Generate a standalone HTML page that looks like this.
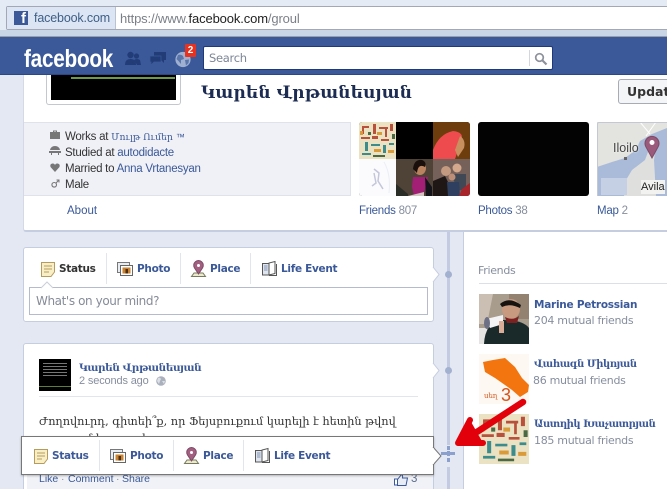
<!DOCTYPE html>
<html><head><meta charset="utf-8">
<style>
html,body{margin:0;padding:0;width:667px;height:489px;overflow:hidden}
body{position:relative;background:#e4e8f2;font-family:"Liberation Sans","DejaVu Sans",sans-serif;font-size:11.5px;color:#333}
#w{position:absolute;left:0;top:0;width:667px;height:489px;overflow:hidden}
.a{position:absolute}
.t{position:absolute;white-space:nowrap;line-height:14px}
.s{letter-spacing:-.25px}
.l{color:#3b5998}
.g{color:#868e9e}
.arm{font-family:"DejaVu Serif",serif}
.b{font:bold 10.5px/14px "DejaVu Sans",sans-serif;color:#3b5998;letter-spacing:-.3px}
.card{position:absolute;background:#fff;border:1px solid #c5cde0;border-radius:3px;box-sizing:border-box}
.sep{position:absolute;width:1px;background:#e2e5ec}
svg{position:absolute;overflow:visible}
</style></head><body><div id="w">

<svg width="0" height="0" style="left:0;top:0"><defs><symbol id="pat" viewBox="0 0 37 37"><rect width="37" height="37" fill="#ebe2c4"/><path d="M3 4h7v2H5v6H3ZM14 2h3v10h-3ZM20 5h9v2h-9ZM26 7h2v8h-2ZM31 2h3v7h-3ZM2 15h9v2H2ZM13 14h6v3h-6ZM22 17h8v2h-8Z" fill="#b8503c"/><path d="M6 20h3v9H6ZM12 22h9v2h-9ZM24 23h3v8h-3ZM30 21h5v2h-5ZM3 31h9v2H3Z" fill="#3d8c8c"/><path d="M15 27h7v3h-7ZM1 9h3v4H1ZM18 10h5v3h-5ZM29 28h6v3h-6Z" fill="#d99a3a"/><path d="M14 33h12v2H14ZM9 10h3v3H9ZM33 12h3v5h-3Z" fill="#4a6a45"/></symbol></defs></svg>

<!-- browser bar -->
<div class="a" style="left:0;top:0;width:667px;height:30px;background:#e4ebf5"></div>
<div class="a" style="left:0;top:30px;width:667px;height:6px;background:#c8d6e6"></div>
<div class="a" style="left:0;top:36px;width:667px;height:1px;background:#9a9ea6"></div>
<div class="a" style="left:6px;top:6px;width:670px;height:24px;box-sizing:border-box;background:#fff;border:1px solid #a3a8b4;border-radius:2px 0 0 2px"></div>
<div class="a" style="left:7px;top:7px;width:108px;height:22px;background:#dbe5f4;border-right:1px solid #b9c3d2"></div>
<div class="a" style="left:14px;top:11px;width:14px;height:14px;background:#3b5998"></div>
<div class="t" style="left:21px;top:12px;color:#fff;font:bold 15px/14px 'Liberation Sans',sans-serif">f</div>
<div class="t" style="left:34px;top:11px;color:#3f5f86;font:12.5px/15px 'Liberation Sans',sans-serif;letter-spacing:-.15px">facebook.com</div>
<div class="t" style="left:120px;top:11px;color:#7b8088;font:13px/15px 'Liberation Sans',sans-serif;letter-spacing:-.13px">https://www.<span style="color:#222">facebook.com</span>/groul</div>

<!-- fb header -->
<div class="a" style="left:0;top:37px;width:667px;height:37px;background:#3b5998;border-bottom:1px solid #2a4887"></div>
<div class="t" style="left:24px;top:45px;color:#fff;font:bold 25px/28px 'Liberation Sans',sans-serif;letter-spacing:-.3px;transform:scaleX(.83);transform-origin:0 0">facebook</div>
<svg style="left:124px;top:50px" width="18" height="18" viewBox="0 0 18 18"><circle cx="6.500" cy="5" r="3.200" fill="#223c78"/><path d="M1 15Q1 9 6.500 9Q12 9 12 15Z" fill="#223c78"/><circle cx="12.500" cy="6" r="2.600" fill="#223c78"/><path d="M10 10Q13 8 16 10L17 15H13Z" fill="#223c78"/></svg>
<svg style="left:149px;top:51px" width="18" height="16" viewBox="0 0 18 16"><path d="M5 1H17V9H15V12L12 9H5Z" fill="#223c78"/><path d="M1 5H12V11H5L2 14V11H1Z" fill="#223c78" stroke="#3b5998" stroke-width=".7"/></svg>
<svg style="left:175px;top:51px" width="16" height="17" viewBox="0 0 16 17"><circle cx="8" cy="8.500" r="7.600" fill="#9fb0d0"/><path d="M3 4Q6 3 8 5L9 8L6 9L6 13L3.500 10L1.500 8ZM10 9L14 8.500L13.500 12L11 14.500Z" fill="#5b76ab"/></svg>
<div class="a" style="left:185px;top:44px;width:11px;height:13px;background:#e8321f;color:#fff;font:bold 10px/13px 'Liberation Sans',sans-serif;text-align:center;border-radius:1px">2</div>

<div class="a" style="left:203px;top:46px;width:350px;height:24px;box-sizing:border-box;background:#fff;border:1px solid #20397a;border-radius:2px"></div>
<div class="t" style="left:209px;top:51px;color:#7d8696;font:11.5px/14px 'DejaVu Sans',sans-serif;letter-spacing:-.3px">Search</div>
<div class="a" style="left:529px;top:50px;width:1px;height:16px;background:#d3d6dc"></div>
<svg style="left:534px;top:52px" width="14" height="14" viewBox="0 0 14 14"><circle cx="5.500" cy="5.500" r="3.800" fill="none" stroke="#8c919b" stroke-width="1.700"/><path d="M8.400 8.400L12.500 12.500" stroke="#8c919b" stroke-width="2.200"/></svg>

<!-- spine and right column -->
<div class="a" style="left:447px;top:232px;width:3px;height:257px;background:#c2cbe2"></div>
<div class="a" style="left:463px;top:232px;width:204px;height:257px;background:#fff;border-left:1px solid #c5cde0"></div>

<!-- profile card -->
<div class="a" style="left:23px;top:75px;width:650px;height:157px;box-sizing:border-box;background:#fff;border-left:1px solid #d4d9e6;border-bottom:2px solid #c5cde0;border-radius:0 0 0 3px"></div>
<div class="a" style="left:46px;top:75px;width:135px;height:30px;box-sizing:border-box;background:#fff;border:1px solid #c4c7cd;border-top:0;border-radius:0 0 3px 3px"></div>
<div class="a" style="left:51px;top:75px;width:125px;height:25px;background:#000"></div>
<div class="a" style="left:71px;top:77px;width:104px;height:2px;background:#6f9a4a"></div>
<div class="t arm" style="left:201px;top:81px;color:#1c2c52;font-size:17px;line-height:24px;font-weight:bold;letter-spacing:.1px">Կարեն Վրթանեսյան</div>
<div class="a" style="left:618px;top:79px;width:60px;height:25px;box-sizing:border-box;background:#f4f5f7;border:1px solid #a6abb5;border-radius:3px"></div>
<div class="t" style="left:627px;top:84px;color:#333;font:bold 12.5px/15px 'DejaVu Sans',sans-serif">Update</div>

<div class="a" style="left:24px;top:122px;width:327px;height:74px;box-sizing:border-box;background:#f0f1f7;border-top:1px solid #dfe2ea;border-bottom:1px solid #dfe2ea;border-right:1px solid #dfe2ea"></div>

<svg style="left:50px;top:130px" width="10" height="10" viewBox="0 0 10 10"><path d="M0 2H3V0.500H7V2H10V9H0ZM4 1.500V2H6V1.500Z" fill="#777" fill-rule="evenodd"/></svg>
<svg style="left:49px;top:146px" width="12" height="10" viewBox="0 0 12 10"><path d="M1 4Q2 0 6 0Q10 0 11 4ZM0 5H12V7H10V9H9V7H3V9H2V7H0Z" fill="#777"/></svg>
<svg style="left:50px;top:163px" width="10" height="9" viewBox="0 0 10 9"><path d="M5 9L0.500 4Q-.5 1 2.500 .5Q4.300 .3 5 2Q5.700 .3 7.500 .5Q10.500 1 9.500 4Z" fill="#777"/></svg>
<svg style="left:51px;top:179px" width="9" height="9" viewBox="0 0 9 9"><circle cx="3.200" cy="5.800" r="2.300" fill="none" stroke="#777" stroke-width="1.100"/><path d="M5 4L8 1M5.500 1H8V3.500" fill="none" stroke="#777" stroke-width="1"/></svg>

<div class="t s" style="left:65px;top:130px">Works at <span class="l arm" style="font-size:9.300px;letter-spacing:0">Մուլթ Ումեր</span> <span style="color:#3b5998;font-size:9px">™</span></div>
<div class="t s" style="left:65px;top:146px">Studied at <span class="l">autodidacte</span></div>
<div class="t s" style="left:65px;top:162px">Married to <span class="l">Anna Vrtanesyan</span></div>
<div class="t s" style="left:65px;top:178px">Male</div>
<div class="t l" style="left:67px;top:204px">About</div>

<!-- friends mosaic -->
<div class="a" style="left:359px;top:122px;width:111px;height:74px;border-radius:3px;overflow:hidden;background:#000">
 <svg style="left:0;top:0" width="37" height="37"><use href="#pat" width="37" height="37"/></svg>
 <div class="a" style="left:74px;top:0;width:37px;height:37px;background:#6d3d0d"></div>
 <svg style="left:74px;top:0" width="37" height="37" viewBox="0 0 37 37"><path d="M0 37V28Q6 12 20 9Q32 10 28 20L22 37Z" fill="#ee4b4f"/><path d="M27 14Q33 18 31 26L25 35L22 28Z" fill="#c8905f"/></svg>
 <div class="a" style="left:0;top:37px;width:37px;height:37px;background:#fbfbfd"></div>
 <svg style="left:0;top:37px" width="37" height="37" viewBox="0 0 37 37"><path d="M15 10L20 14L19 22L24 30M15 14L17 24L13 27" fill="none" stroke="#c4c7da" stroke-width="1.500"/><path d="M25 3Q32 15 30 34" fill="none" stroke="#eceef5"/></svg>
 <div class="a" style="left:37px;top:37px;width:37px;height:37px;background:#4f4338"></div>
 <svg style="left:37px;top:37px" width="37" height="37" viewBox="0 0 37 37"><path d="M0 25L12 35V37H0Z" fill="#2a2c26"/><path d="M17 18H32L28 34L18 37L16 28Z" fill="#a31f76"/><path d="M29 18L36 28V37H30Z" fill="#15131a"/><ellipse cx="24" cy="9" rx="6" ry="7" fill="#b9835f"/><path d="M17 10Q18 0 26 1Q31 3 29 8Q22 4 21 14Z" fill="#1b0f0c"/><path d="M12 37L28 33V37Z" fill="#d3c5c0"/></svg>
 <div class="a" style="left:74px;top:37px;width:37px;height:37px;background:#75605a"></div>
 <svg style="left:74px;top:37px" width="37" height="37" viewBox="0 0 37 37"><path d="M0 37V22L12 17L22 37Z" fill="#1e1716"/><circle cx="13" cy="12" r="5" fill="#c49a80"/><circle cx="24" cy="9" r="4.500" fill="#d3a88c"/><path d="M19 15H33V30L24 32Z" fill="#3f4854"/><circle cx="19" cy="18" r="3.500" fill="#bd8f79"/><path d="M14 23H26L27 37H15Z" fill="#2f3f5f"/><path d="M29 30L37 24V37H26Z" fill="#a8252b"/></svg>
</div>
<div class="t s" style="left:359px;top:204px"><span class="l">Friends</span> <span class="g">807</span></div>

<div class="a" style="left:478px;top:122px;width:111px;height:74px;background:#030303;border-radius:3px"></div>
<div class="t s" style="left:478px;top:204px"><span class="l">Photos</span> <span class="g">38</span></div>

<!-- map -->
<svg style="left:597px;top:122px" width="70" height="74" viewBox="597 122 70 74"><rect x="597" y="122" width="70" height="74" fill="#a9bbd9"/><path d="M597 122H667V128L652 134L640 141L636 150L625 158L612 162L597 167Z" fill="#e3e3df"/><path d="M656 143L654 160L656 196H624L626 180L632 170L645 160L648 152Z" fill="#dfe0de"/><rect x="601" y="178" width="26" height="17" fill="#c5d0e4"/><path d="M640 122L650 134M656 122L646 136" stroke="#fff" fill="none"/><path d="M597.500 196V124Q597.500 122.500 599 122.500H667" fill="none" stroke="#c4c8d2"/></svg>
<div class="t" style="left:613px;top:141px;color:#444;font-size:12.500px;text-shadow:0 0 2px #fff">Iloilo</div>
<div class="a" style="left:624px;top:157px;width:3px;height:3px;background:#666"></div>
<svg style="left:644px;top:135px" width="16" height="24" viewBox="0 0 16 24"><path d="M8 23L2 12A7 7 0 1 1 14 12Z" fill="#9a5a7c" stroke="#7d4a66"/><circle cx="8" cy="7.500" r="2.500" fill="#fff"/></svg>
<div class="t" style="left:641px;top:180px;color:#222;font-size:11px;background:#f2f2f0">Avila</div>
<div class="t s" style="left:597px;top:204px"><span class="l">Map</span> <span class="g">2</span></div>

<!-- status card -->
<div class="card" style="left:23px;top:247px;width:411px;height:75px"></div>
<svg style="left:432px;top:267px" width="8" height="15" viewBox="0 0 8 15"><path d="M1 0L7 7.500L1 15" fill="#fff" stroke="#c5cde0"/><path d="M0 1V14" stroke="#fff" stroke-width="2"/></svg>
<div class="a" style="left:445px;top:271px;width:7px;height:7px;border-radius:50%;background:#a3b1d0"></div>

<svg style="left:41px;top:262px" width="14" height="15" viewBox="0 0 14 15"><path d="M.5 .5H13.500V10L10 14.500H.5Z" fill="#f8efc6" stroke="#b69b5e"/><path d="M3 4H11M3 7H11M3 10H8" stroke="#b69b5e"/></svg>
<div class="t b" style="left:59px;top:262px;color:#333">Status</div>
<div class="sep" style="left:106px;top:253px;height:31px"></div>
<svg style="left:117px;top:262px" width="16" height="14" viewBox="0 0 16 14"><rect x=".5" y=".5" width="12" height="10" fill="#e8edf3" stroke="#777"/><rect x="3.500" y="3.500" width="12" height="10" fill="#fff" stroke="#666"/><rect x="5.500" y="5.500" width="8" height="6" fill="#c9822f"/><rect x="8.500" y="7" width="2.500" height="4.500" fill="#4e2d10"/></svg>
<div class="t b" style="left:137px;top:262px">Photo</div>
<div class="sep" style="left:180px;top:253px;height:31px"></div>
<svg style="left:191px;top:261px" width="15" height="16" viewBox="0 0 15 16"><path d="M3 12L0.500 15.500H14.500L12 12Z" fill="#eceacc" stroke="#777a5e"/><path d="M7.500 13L3.500 7A4.800 4.800 0 1 1 11.500 7Z" fill="#a25f80" stroke="#7d4a66"/><circle cx="7.500" cy="4.500" r="1.500" fill="#fff"/></svg>
<div class="t b" style="left:210px;top:262px">Place</div>
<div class="sep" style="left:250px;top:253px;height:31px"></div>
<svg style="left:262px;top:261px" width="15" height="15" viewBox="0 0 15 15"><path d="M.5 2.500H7V14H.5Z" fill="#dfe5ef" stroke="#555"/><path d="M7 14V2L13 .5V12.500Z" fill="#fff" stroke="#555"/><path d="M7 14.500H14.500V3" fill="none" stroke="#555"/><path d="M2 5H5.500M2 7H5.500M2 9H5.500" stroke="#8292b4"/></svg>
<div class="t b" style="left:281px;top:262px">Life Event</div>

<div class="a" style="left:29px;top:287px;width:399px;height:28px;box-sizing:border-box;background:#fff;border:1px solid #b4bbcd"></div>
<svg style="left:41px;top:282px" width="12" height="6" viewBox="0 0 12 6"><path d="M0 6L6 0L12 6" fill="#fff" stroke="#c9ced9"/><path d="M1 6.500H11" stroke="#fff" stroke-width="2"/></svg>
<div class="t" style="left:36px;top:294px;color:#858b98;font:12px/15px 'DejaVu Sans',sans-serif;letter-spacing:-.4px">What's on your mind?</div>

<!-- post card -->
<div class="card" style="left:23px;top:343px;width:411px;height:160px"></div>
<svg style="left:432px;top:363px" width="8" height="15" viewBox="0 0 8 15"><path d="M1 0L7 7.500L1 15" fill="#fff" stroke="#c5cde0"/><path d="M0 1V14" stroke="#fff" stroke-width="2"/></svg>
<div class="a" style="left:445px;top:367px;width:7px;height:7px;border-radius:50%;background:#a3b1d0"></div>
<div class="a" style="left:39px;top:359px;width:32px;height:32px;background:#000"></div>
<div class="a" style="left:43px;top:363px;width:24px;height:14px;background:repeating-linear-gradient(#777 0 1px,#000 1px 3px)"></div>
<div class="a" style="left:39px;top:386px;width:32px;height:1px;background:#5f7d3b"></div>
<div class="t arm" style="left:79px;top:361px;color:#3b5998;font-size:10.500px;font-weight:bold;letter-spacing:-.45px">Կարեն Վրթանեսյան</div>
<div class="t g" style="left:79px;top:374px;font-size:11px;letter-spacing:-.15px">2 seconds ago</div>
<svg style="left:156px;top:376px" width="10" height="10" viewBox="0 0 10 10"><circle cx="5" cy="5" r="4.800" fill="#aab0bc"/><path d="M2 2Q4 1 5 3L4 5L3 8L1 5ZM6 5L9 5L8 8Z" fill="#dcdfe5"/></svg>
<div class="a" style="left:39px;top:396px;width:379px;height:1px;background:#e2e5ec"></div>
<div class="t arm" style="left:39px;top:414px;color:#333;font-size:11.300px;line-height:16px">Ժողովուրդ, գիտեի՞ք, որ Ֆեյսբուքում կարելի է հետին թվով</div>
<div class="t arm" style="left:39px;top:431px;color:#333;font-size:11.300px;line-height:16px">գրառում կատարել</div>

<div class="a" style="left:27px;top:473px;width:406px;height:16px;background:#f0f2f7"></div>
<div class="t l" style="left:39px;top:472px;font-size:10.500px">Like</div>
<div class="t g" style="left:61px;top:472px;font-size:10.500px">·</div>
<div class="t l" style="left:68px;top:472px;font-size:10.500px">Comment</div>
<div class="t g" style="left:116px;top:472px;font-size:10.500px">·</div>
<div class="t l" style="left:122px;top:472px;font-size:10.500px">Share</div>
<svg style="left:394px;top:474px" width="14" height="12" viewBox="0 0 14 12"><path d="M.5 5H3.500V11H.5Z" fill="#fff" stroke="#3b5998"/><path d="M3.500 5.500L7.500 .5Q9 1 8.500 4H13.500L12 11.500H3.500Z" fill="#e8ecf5" stroke="#3b5998"/></svg>
<div class="t" style="left:411px;top:472px;color:#5d6d8c">3</div>

<!-- popup -->
<div class="a" style="left:21px;top:436px;width:413px;height:39px;box-sizing:border-box;background:#fff;border:1px solid #777;box-shadow:0 1px 2px rgba(0,0,0,.25)"></div>
<svg style="left:433px;top:447px" width="9" height="18" viewBox="0 0 9 18"><path d="M0 0L8 9L0 18" fill="#fff" stroke="#777"/><path d="M0 1V17" stroke="#fff" stroke-width="1.500"/></svg>

<svg style="left:34px;top:449px" width="14" height="15" viewBox="0 0 14 15"><path d="M.5 .5H13.500V10L10 14.500H.5Z" fill="#f8efc6" stroke="#b69b5e"/><path d="M3 4H11M3 7H11M3 10H8" stroke="#b69b5e"/></svg>
<div class="t b" style="left:52px;top:449px">Status</div>
<div class="sep" style="left:99px;top:440px;height:31px"></div>
<svg style="left:110px;top:449px" width="16" height="14" viewBox="0 0 16 14"><rect x=".5" y=".5" width="12" height="10" fill="#e8edf3" stroke="#777"/><rect x="3.500" y="3.500" width="12" height="10" fill="#fff" stroke="#666"/><rect x="5.500" y="5.500" width="8" height="6" fill="#c9822f"/><rect x="8.500" y="7" width="2.500" height="4.500" fill="#4e2d10"/></svg>
<div class="t b" style="left:130px;top:449px">Photo</div>
<div class="sep" style="left:173px;top:440px;height:31px"></div>
<svg style="left:184px;top:448px" width="15" height="16" viewBox="0 0 15 16"><path d="M3 12L0.500 15.500H14.500L12 12Z" fill="#eceacc" stroke="#777a5e"/><path d="M7.500 13L3.500 7A4.800 4.800 0 1 1 11.500 7Z" fill="#a25f80" stroke="#7d4a66"/><circle cx="7.500" cy="4.500" r="1.500" fill="#fff"/></svg>
<div class="t b" style="left:203px;top:449px">Place</div>
<div class="sep" style="left:243px;top:440px;height:31px"></div>
<svg style="left:255px;top:448px" width="15" height="15" viewBox="0 0 15 15"><path d="M.5 2.500H7V14H.5Z" fill="#dfe5ef" stroke="#555"/><path d="M7 14V2L13 .5V12.500Z" fill="#fff" stroke="#555"/><path d="M7 14.500H14.500V3" fill="none" stroke="#555"/><path d="M2 5H5.500M2 7H5.500M2 9H5.500" stroke="#8292b4"/></svg>
<div class="t b" style="left:274px;top:449px">Life Event</div>

<!-- dashed connector -->
<div class="a" style="left:447px;top:445px;width:3px;height:22px;background:#e4e8f2"></div>
<div class="a" style="left:447px;top:446px;width:3px;height:4px;background:#8ba0cc"></div>
<div class="a" style="left:447px;top:451px;width:3px;height:5px;background:#8ba0cc"></div>
<div class="a" style="left:447px;top:458px;width:3px;height:4px;background:#8ba0cc"></div>
<div class="a" style="left:441px;top:452px;width:14px;height:3px;background:#8ba0cc"></div>

<!-- friends panel -->
<div class="t g" style="left:478px;top:264px;font:11px/14px 'DejaVu Sans',sans-serif;letter-spacing:-.3px">Friends</div>
<div class="a" style="left:479px;top:283px;width:190px;height:1px;background:#dcdfe6"></div>

<div class="a" style="left:479px;top:294px;width:50px;height:50px;overflow:hidden;background:#b8a99a">
<svg style="left:0;top:0" width="50" height="50" viewBox="0 0 50 50"><rect width="50" height="50" fill="#a89c8c"/><rect x="30" width="20" height="25" fill="#92826f"/><path d="M0 0H14L8 30H0Z" fill="#cbbfb3"/><path d="M0 34H8V50H0Z" fill="#e6e4e2"/><path d="M5 50Q6 28 24 26Q44 26 50 34V50Z" fill="#1a2a2a"/><ellipse cx="32" cy="15" rx="9" ry="10" fill="#c89a80"/><path d="M21 10Q30 2 42 11L41 14Q31 9 23 13Z" fill="#161311"/><path d="M26 23Q34 27 40 22L38 29L28 29Z" fill="#7d2020"/><path d="M7 25L24 21V30L11 34Z" fill="#f3f3f6"/><ellipse cx="8" cy="29" rx="3" ry="6" fill="#6d6f85"/><rect x="20" y="27" width="5" height="12" fill="#d9ad97"/></svg></div>
<div class="t" style="left:534px;top:298px;font:bold 10.500px/14px 'DejaVu Sans',sans-serif;color:#3b5998;letter-spacing:-.25px">Marine Petrossian</div>
<div class="t g" style="left:534px;top:314px;font:11px/14px 'DejaVu Sans',sans-serif;letter-spacing:-.3px">204 mutual friends</div>

<div class="a" style="left:479px;top:354px;width:50px;height:50px;background:#fdf8f2;overflow:hidden">
<svg style="left:0;top:0" width="50" height="50" viewBox="0 0 50 50"><path d="M4 8L14 6L26 4L36 13L43 24L50 31L49 38L41 43L33 36L26 31L16 24L6 18Z" fill="#f27510"/><text x="5" y="44" font-size="7" fill="#d5541a" font-family="DejaVu Serif,serif">սեղ</text><text x="22" y="47" font-size="18" fill="#d5541a" font-family="Liberation Sans,sans-serif">3</text></svg></div>
<div class="t arm" style="left:534px;top:358px;color:#3b5998;font-size:10px;font-weight:bold;letter-spacing:-.45px">Վահագն Միկոյան</div>
<div class="t g" style="left:533px;top:374px;font:11px/14px 'DejaVu Sans',sans-serif;letter-spacing:-.3px">86 mutual friends</div>

<div class="a" style="left:479px;top:414px;width:50px;height:50px;overflow:hidden"><svg style="left:0;top:0" width="50" height="50"><use href="#pat" width="50" height="50"/></svg></div>
<div class="t arm" style="left:534px;top:418px;color:#3b5998;font-size:10px;font-weight:bold;letter-spacing:-.45px">Աստղիկ Խաչատրյան</div>
<div class="t g" style="left:534px;top:434px;font:11px/14px 'DejaVu Sans',sans-serif;letter-spacing:-.3px">185 mutual friends</div>

<!-- red arrow -->
<svg style="left:450px;top:390px" width="80" height="60" viewBox="450 390 80 60"><path d="M523 402L463 441" stroke="#e2000a" stroke-width="6.500" stroke-linecap="round" fill="none"/><path d="M470 420L458 443L483 443" stroke="#e2000a" stroke-width="6" stroke-linecap="round" stroke-linejoin="round" fill="#e2000a"/></svg>

</div></body></html>
